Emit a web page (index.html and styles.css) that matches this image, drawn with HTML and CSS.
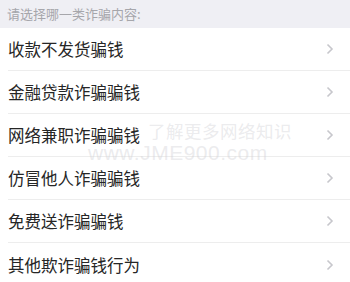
FILE: index.html
```html
<!DOCTYPE html>
<html lang="zh">
<head>
<meta charset="utf-8">
<link rel="stylesheet" href="styles.css">
</head>
<body>
<div class="page">
  <div class="header">请选择哪一类诈骗内容:</div>
  <ul class="list">
    <li class="row"><span class="label">收款不发货骗钱</span><span class="chev"><svg width="8" height="12" viewBox="0 0 8 12"><path d="M1.5 1.5 L6 6 L1.5 10.5" fill="none" stroke="#c7c7cc" stroke-width="1.6"/></svg></span></li>
    <li class="row"><span class="label">金融贷款诈骗骗钱</span><span class="chev"><svg width="8" height="12" viewBox="0 0 8 12"><path d="M1.5 1.5 L6 6 L1.5 10.5" fill="none" stroke="#c7c7cc" stroke-width="1.6"/></svg></span></li>
    <li class="row"><span class="label">网络兼职诈骗骗钱</span><span class="chev"><svg width="8" height="12" viewBox="0 0 8 12"><path d="M1.5 1.5 L6 6 L1.5 10.5" fill="none" stroke="#c7c7cc" stroke-width="1.6"/></svg></span></li>
    <li class="row"><span class="label">仿冒他人诈骗骗钱</span><span class="chev"><svg width="8" height="12" viewBox="0 0 8 12"><path d="M1.5 1.5 L6 6 L1.5 10.5" fill="none" stroke="#c7c7cc" stroke-width="1.6"/></svg></span></li>
    <li class="row"><span class="label">免费送诈骗骗钱</span><span class="chev"><svg width="8" height="12" viewBox="0 0 8 12"><path d="M1.5 1.5 L6 6 L1.5 10.5" fill="none" stroke="#c7c7cc" stroke-width="1.6"/></svg></span></li>
    <li class="row last"><span class="label">其他欺诈骗钱行为</span><span class="chev"><svg width="8" height="12" viewBox="0 0 8 12"><path d="M1.5 1.5 L6 6 L1.5 10.5" fill="none" stroke="#c7c7cc" stroke-width="1.6"/></svg></span></li>
  </ul>
  <div class="watermark">
    <div class="wm1">了解更多网络知识</div>
    <div class="wm2">www.JME900.com</div>
  </div>
</div>
</body>
</html>
```

FILE: styles.css
```css
html, body {
  margin: 0;
  padding: 0;
  background: #ffffff;
}
.page {
  position: relative;
  width: 350px;
  height: 282px;
  overflow: hidden;
  font-family: "Noto Sans CJK SC", "Noto Sans", sans-serif;
}
.header {
  height: 28px;
  background: #efeff4;
  color: #a6a6ab;
  font-size: 13px;
  line-height: 28px;
  padding-left: 7px;
  box-sizing: border-box;
}
.list {
  list-style: none;
  margin: 0;
  padding: 0 0 0 8px;
}
.row {
  height: 43px;
  display: flex;
  align-items: center;
  justify-content: space-between;
  border-bottom: 1px solid #ededed;
  box-sizing: border-box;
  padding-right: 16px;
}
.row.last {
  border-bottom: none;
}
.label {
  font-size: 16.5px;
  line-height: 18px;
  color: #262626;
}
.chev {
  display: flex;
  align-items: center;
}
.watermark {
  position: absolute;
  left: 88px;
  top: 121px;
  color: rgba(205, 205, 210, 0.4);
  pointer-events: none;
}
.wm1 {
  margin-left: 60px;
  font-size: 17.5px;
  line-height: 20px;
  letter-spacing: 0.5px;
}
.wm2 {
  margin-top: 3px;
  font-family: "Liberation Sans", sans-serif;
  font-size: 21px;
  line-height: 18px;
  letter-spacing: 0.5px;
}
```
